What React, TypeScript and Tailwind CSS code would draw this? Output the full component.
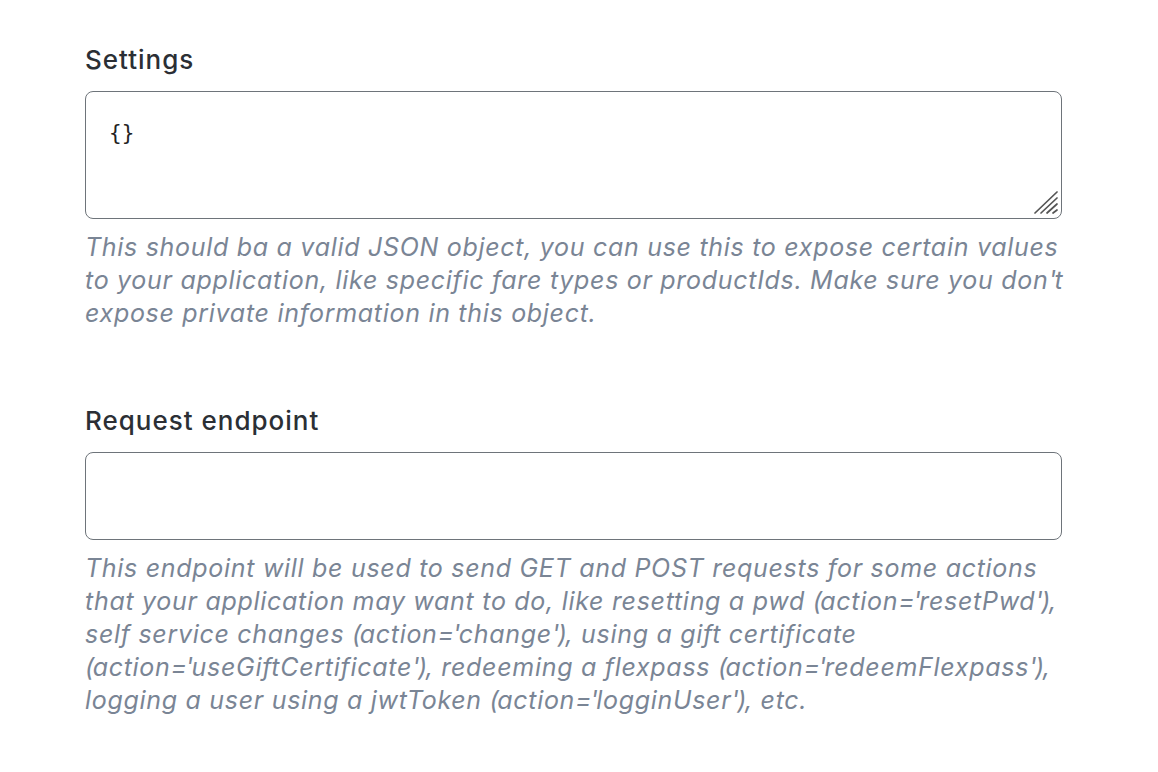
import React from "react";

const font = { fontFamily: "Inter, 'Noto Sans', sans-serif" };

function T({ t }: { t: string }) {
  const parts = t.split(/(['()=])/);
  return (
    <>
      {parts.map((p, i) =>
        /^['()=]$/.test(p) ? (
          <span key={i} className="tracking-[-1.5px]">
            {p}
          </span>
        ) : (
          <React.Fragment key={i}>{p}</React.Fragment>
        )
      )}
    </>
  );
}

export default function App() {
  return (
    <div className="min-h-screen bg-white pl-[85px] pr-[96px] pt-[44px]" style={font}>
      <div className="flex flex-col">
        <label className="text-[26px] leading-[32px] font-medium tracking-[1px] text-[#2b2f35]">Settings</label>
        <div className="relative mt-[15px]">
          <textarea
            defaultValue="{}"
            className="block h-[128px] w-[977px] resize-none rounded-[8px] border border-[#6e747a] px-[23px] pt-[27px] text-[21px] leading-[28px] text-[#222] outline-none"
            style={{ fontFamily: "'DejaVu Sans Mono', monospace" }}
          />
          <svg className="absolute bottom-[4px] left-[948px] h-[24px] w-[26px]" viewBox="0 0 26 24">
            <g stroke="#555" strokeWidth="1.7" strokeLinecap="round">
              <line x1="2" y1="22" x2="24" y2="1" />
              <line x1="8" y1="22" x2="24" y2="7" />
              <line x1="14" y1="22" x2="24" y2="13" />
              <line x1="20" y1="22" x2="24" y2="19" />
            </g>
          </svg>
        </div>
        <p className="mt-[12px] whitespace-nowrap text-[25px] italic leading-[33px] tracking-[0.7px] text-[#7a8595]">
          This should ba a valid JSON object, you can use this to expose certain values
          <br />
          to your application, like specific fare types or productIds. Make sure you don<T t="'" />t
          <br />
          expose private information in this object.
        </p>

        <label className="mt-[75px] text-[26px] leading-[32px] font-medium tracking-[1px] text-[#2b2f35]">Request endpoint</label>
        <input
          type="text"
          className="mt-[15px] block h-[88px] w-[977px] rounded-[8px] border border-[#6e747a] px-[23px] text-[20px] outline-none"
        />
        <p className="mt-[12px] whitespace-nowrap text-[25px] italic leading-[33px] tracking-[0.7px] text-[#7a8595]">
          This endpoint will be used to send GET and POST requests for some actions
          <br />
          <T t="that your application may want to do, like resetting a pwd (action='resetPwd')," />
          <br />
          <T t="self service changes (action='change'), using a gift certificate" />
          <br />
          <T t="(action='useGiftCertificate'), redeeming a flexpass (action='redeemFlexpass')," />
          <br />
          <T t="logging a user using a jwtToken (action='logginUser'), etc." />
        </p>
      </div>
    </div>
  );
}
